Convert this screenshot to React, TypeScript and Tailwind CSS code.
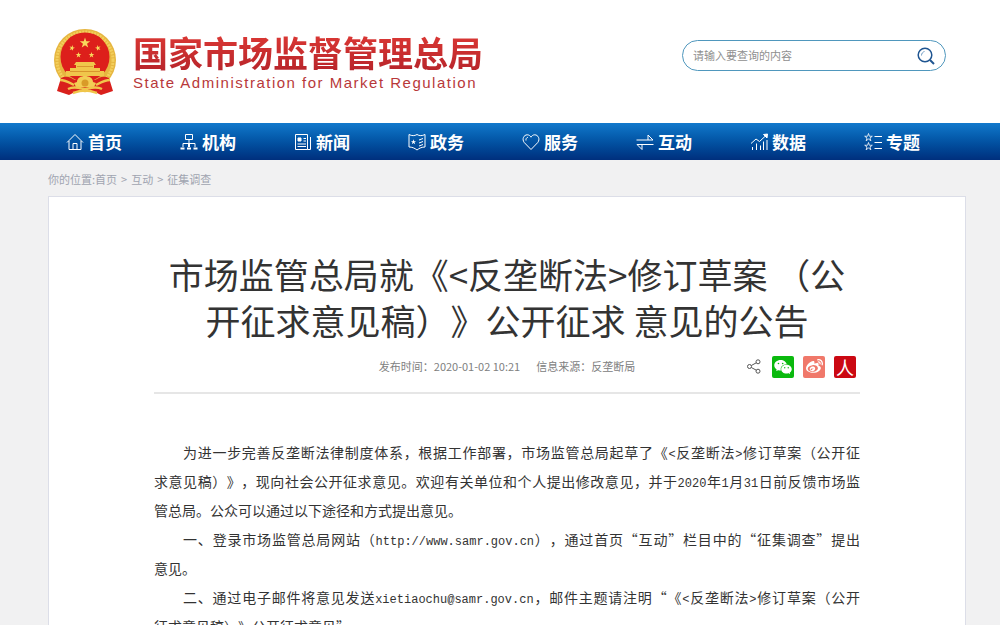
import type { ReactNode } from "react";
import { AiFillWechat } from "react-icons/ai";
import { FaWeibo } from "react-icons/fa";

type NavItem = {
  label: string;
  icon: ReactNode;
};

const STAR = "M0 -1 L0.23 -0.31 L0.95 -0.31 L0.37 0.12 L0.59 0.81 L0 0.39 L-0.59 0.81 L-0.37 0.12 L-0.95 -0.31 L-0.23 -0.31 Z";

const navItems: NavItem[] = [
  {
    label: "首页",
    icon: <path d="M1 9.5 9 1.5l8 8M3 8v8.5h12V8M7 16.5v-6h4v6" />,
  },
  {
    label: "机构",
    icon: (
      <>
        <path d="M5.5 1.5h7v5h-7zM9 6.5v4M3 14v-3.5h12V14" />
        <path d="M0.5 15.5h4M7 15.5h4M13.5 15.5h4M9 10.5V14" strokeWidth="2" />
      </>
    ),
  },
  {
    label: "新闻",
    icon: (
      <>
        <path d="M1.5 1.5h12v15h-12zM16.5 4v12.5h-3M9.5 5.5h2.5M9.500 8h2.500M3.500 11h8.500M3.500 13.500h8.500" />
        <path d="M4 5h3v3H4z" fill="currentColor" />
      </>
    ),
  },
  {
    label: "政务",
    icon: (
      <>
        <path d="M1 1.5c3 1.5 5.5 1.500 8 0 2.500 1.500 5 1.500 8 0V14c-3 0-5.500 1-8 3-2.500-2-5-3-8-3zM11 7l4-1.500M11 10l4-1.500M11 13l4-1.500" />
        <path d={STAR} transform="translate(5.5 9) scale(2.8)" fill="currentColor" stroke="none" />
      </>
    ),
  },
  {
    label: "服务",
    icon: <path d="M9 16.5 2.3 9.600C-0.500 6 2 1.800 5.200 1.800c1.800 0 3 1 3.800 2.400.8-1.400 2-2.400 3.800-2.400 3.200 0 5.700 4.200 2.900 7.800L9 16.500M4 7.500c-.3-1.700.5-2.800 1.800-3.200" />,
  },
  {
    label: "互动",
    icon: <path d="M0.5 7h16.500l-5-5V7M17.500 11.500H1l5 5v-5" />,
  },
  {
    label: "数据",
    icon: (
      <>
        <path d="M1 10.5 6 6l3.500 2.500L16.500 2M2.500 17v-3M6.500 17v-6.500M10.500 17v-4.500M13.500 17V8.500M17 17V7" />
        <path d="m13.500 1.500 4-.5-.5 4z" fill="currentColor" />
      </>
    ),
  },
  {
    label: "专题",
    icon: (
      <>
        <path d={STAR} transform="translate(4.5 4.5) scale(4)" strokeWidth="0.2" />
        <path d={STAR} transform="translate(4.5 13.5) scale(4)" strokeWidth="0.2" />
        <path d="M10.500 3.500H18M10.500 9.500H18M10.500 15.500H18" />
      </>
    ),
  },
];

const crumbs = ["首页", "互动", "征集调查"];

const paragraphs = [
  [
    "为进一步完善反垄断法律制度体系，根据工作部署，市场监管总局起草了《<反垄断法>修订草案（公开征",
    "求意见稿）》，现向社会公开征求意见。欢迎有关单位和个人提出修改意见，并于2020年1月31日前反馈市场监",
    "管总局。公众可以通过以下途径和方式提出意见。",
  ],
  [
    "一、登录市场监管总局网站（http://www.samr.gov.cn），通过首页“互动”栏目中的“征集调查”提出",
    "意见。",
  ],
  [
    "二、通过电子邮件将意见发送xietiaochu@samr.gov.cn，邮件主题请注明“《<反垄断法>修订草案（公开",
    "征求意见稿）》公开征求意见”。",
  ],
];

function Emblem() {
  return (
    <svg viewBox="0 0 64 68" className="h-[68px] w-16 shrink-0" aria-hidden="true">
      <circle cx="32" cy="32" r="31" fill="#e6b640" />
      <circle cx="32" cy="32" r="28" fill="none" stroke="#f3cf5c" strokeWidth="3" strokeDasharray="2 1" />
      <circle cx="32" cy="29" r="24.5" fill="#dd1f1b" />
      <path d="M8 50c6-3 10 0 14 2h20c4-2 8-5 14-2l4 13-12 4-6-3H22l-6 3-12-4z" fill="#d9201c" />
      <path d={STAR} transform="translate(32 15) scale(5.5)" fill="#f8d95c" />
      <path d={STAR} transform="translate(19 20) rotate(15) scale(3)" fill="#f8d95c" />
      <path d={STAR} transform="translate(45 20) rotate(-15) scale(3)" fill="#f8d95c" />
      <path d={STAR} transform="translate(25.5 27) scale(3)" fill="#f8d95c" />
      <path d={STAR} transform="translate(38.5 27) scale(3)" fill="#f8d95c" />
      <path d="M21 37l2-3h18l2 3h-2v3h6v3h4v5H13v-5h4v-3h6v-3z" fill="#f0c64b" />
      <path d="M17 43.5h30M24 38.500h16" stroke="#d9962d" />
      <path d="M24 54c0-4 4-6 8-6s8 2 8 6l3 1-2 4H23l-2-4z" fill="#f3cd55" />
      <circle cx="32" cy="55" r="3.5" fill="#d99b28" />
      <path d="M7 52c6 0 10 3 14 5M57 52c-6 0-10 3-14 5M15 61c6-3 11-1 17 0 6-1 11-3 17 0M20 65c4-1 8-3 12-2 4-1 8 1 12 2" fill="none" stroke="#f0c64b" strokeWidth="2.5" />
    </svg>
  );
}

function SearchIcon() {
  return (
    <svg viewBox="0 0 18 18" className="size-[18px]" fill="none" stroke="#1f5591" strokeWidth="1.5" aria-hidden="true">
      <circle cx="8" cy="8" r="6.8" />
      <path d="M4.5 8.500c0-2 1.200-3.500 3-4" strokeWidth="1" stroke="#6f9cc4" />
      <path d="m13 13 4 4" strokeWidth="2" />
    </svg>
  );
}

function ShareIcon() {
  return (
    <svg viewBox="0 0 14 15" className="h-[15px] w-3.5" fill="none" stroke="#555" aria-hidden="true">
      <circle cx="2.5" cy="7.5" r="2" />
      <circle cx="11" cy="2.8" r="2" />
      <circle cx="11" cy="12.2" r="2" />
      <path d="m4.3 6.5 5-2.700M4.300 8.500l5 2.700" />
    </svg>
  );
}

// Latin runs inside the article are set in a narrow monospace
function ArticleLine({ text }: { text: string }) {
  return text.split(/([\x21-\x7e]+)/).map((part, i) =>
    i % 2 ? (
      <span key={i} className="font-['Liberation_Mono',monospace] text-xs leading-none">
        {part}
      </span>
    ) : (
      part
    ),
  );
}

export default function App() {
  return (
    <div
      lang="zh-CN"
      className="min-h-screen bg-[#f1f1f2] font-['Noto_Sans_CJK_SC',sans-serif] [text-spacing-trim:space-all]"
    >
      <header className="bg-white">
        <div className="flex h-[123px] items-center justify-between pr-[54px] pl-[53px]">
          <a href="#" className="flex items-center gap-4">
            <Emblem />
            <span className="flex flex-col pb-0.5">
              <span className="bg-gradient-to-b from-[#df3a35] to-[#b5232a] bg-clip-text text-[35px] leading-11 font-bold text-transparent">
                国家市场监督管理总局
              </span>
              <span className="font-['Liberation_Sans',sans-serif] text-[15px] leading-[18px] tracking-widest text-[#b8383a]">
                State Administration for Market Regulation
              </span>
            </span>
          </a>
          <form
            role="search"
            onSubmit={(e) => e.preventDefault()}
            className="mb-3 flex h-[31px] w-[264px] items-center rounded-full border border-[#4f97bd] pr-2.5 pl-2.5"
          >
            <input
              type="text"
              aria-label="请输入要查询的内容"
              placeholder="请输入要查询的内容"
              className="min-w-0 flex-1 bg-transparent text-[11px] outline-none placeholder:text-[#8f8f8f]"
            />
            <button type="submit" aria-label="搜索">
              <SearchIcon />
            </button>
          </form>
        </div>
      </header>

      <nav className="bg-gradient-to-b from-[#1279cc] to-[#002f7d]">
        <ul className="flex h-[37px] items-center justify-between pr-20 pl-[66px]">
          {navItems.map((item) => (
            <li key={item.label}>
              <a href="#" className="flex items-center gap-1 text-[17px] leading-6 font-bold text-white">
                <svg viewBox="0 0 18 18" className="size-[18px]" fill="none" stroke="currentColor" aria-hidden="true">
                  {item.icon}
                </svg>
                {item.label}
              </a>
            </li>
          ))}
        </ul>
      </nav>

      <main className="pr-[34px] pl-12">
        <div className="flex h-9 items-center gap-1 pt-0.5 text-[11px] text-[#a0a4b0]">
          <span>
            你的位置:
            <a href="#">{crumbs[0]}</a>
          </span>
          {crumbs.slice(1).map((crumb) => (
            <span key={crumb} className="flex gap-1">
              <span>&gt;</span>
              <a href="#">{crumb}</a>
            </span>
          ))}
        </div>

        <article className="border border-[#dcdee8] bg-white px-[105px] pt-[54px] pb-10">
          <h1 className="text-center text-[35px] leading-[46px] text-[#333]">
            市场监管总局就《&lt;反垄断法&gt;修订草案 （公
            <br />
            开征求意见稿）》公开征求 意见的公告
          </h1>

          <div className="grid h-[51px] grid-cols-[1fr_auto_1fr] items-center border-b-2 border-[#e6e6e6] pb-0.5 text-[11px] text-[#808080]">
            <p className="col-start-2 flex gap-4">
              <span>发布时间：2020-01-02 10:21</span>
              <span>信息来源：反垄断局</span>
            </p>
            <div className="flex items-center justify-end gap-[9px] pr-1">
              <button type="button" aria-label="分享" className="pr-0.5">
                <ShareIcon />
              </button>
              <button type="button" aria-label="微信" className="grid size-[22px] place-items-center rounded-xs bg-[#0ab90e] text-white">
                <AiFillWechat size={20} />
              </button>
              <button type="button" aria-label="微博" className="grid size-[22px] place-items-center rounded-xs bg-[#f0786a] text-white">
                <FaWeibo size={17} />
              </button>
              <button type="button" className="size-[22px] rounded-xs bg-[#cb0812] text-lg leading-[22px] text-white">
                人
              </button>
            </div>
          </div>

          <div className="mt-11 text-sm leading-[29px] text-[#333]">
            {paragraphs.map((lines) => (
              <p key={lines[0]}>
                {lines.map((line, i) => (
                  <span
                    key={line}
                    className={`block ${i === 0 ? "pl-[29px]" : ""} ${
                      i < lines.length - 1 ? "[text-align-last:justify]" : ""
                    }`}
                  >
                    <ArticleLine text={line} />
                  </span>
                ))}
              </p>
            ))}
          </div>
        </article>
      </main>
    </div>
  );
}
